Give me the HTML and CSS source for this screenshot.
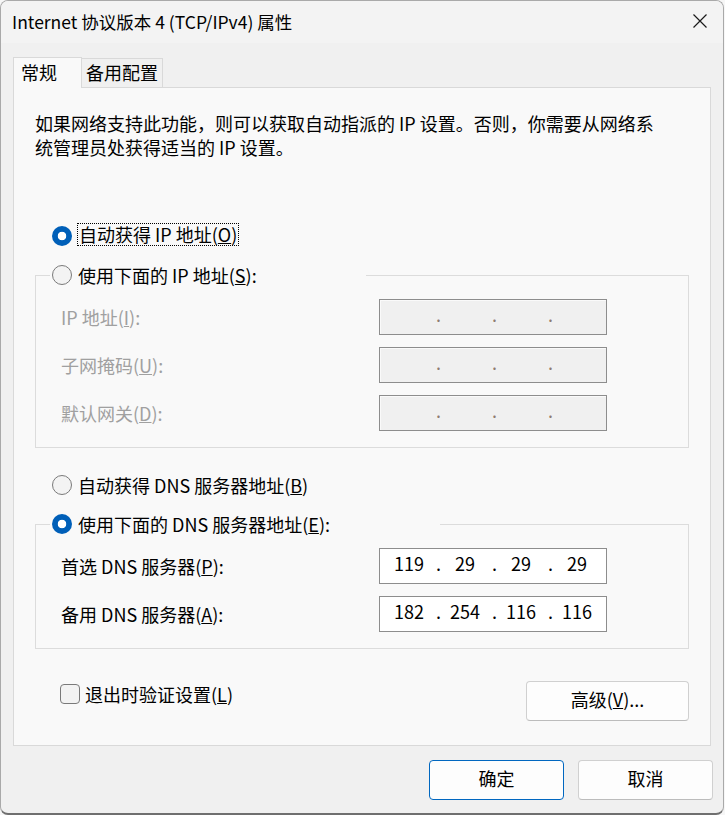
FILE: index.html
```html
<!DOCTYPE html>
<html lang="zh-CN">
<head>
<meta charset="utf-8">
<title>Internet 协议版本 4 (TCP/IPv4) 属性</title>
<link rel="stylesheet" href="styles.css">
</head>
<body>
<div class="window">
  <div class="titlebar">
    <span class="title">Internet 协议版本 4 (TCP/IPv4) 属性</span>
    <svg class="close" width="14" height="14" viewBox="0 0 14 14"><path d="M0.5 0.5 L13.5 13.5 M13.5 0.5 L0.5 13.5" stroke="#1a1a1a" stroke-width="1.2" fill="none"/></svg>
  </div>
  <div class="tabs">
    <div class="tab active">常规</div>
    <div class="tab">备用配置</div>
  </div>
  <div class="panel">
    <p class="intro">如果网络支持此功能，则可以获取自动指派的 IP 设置。否则，你需要从网络系<br>统管理员处获得适当的 IP 设置。</p>

    <div class="opt opt-first">
      <span class="radio checked"></span>
      <span class="focus">自动获得 IP 地址(<u>O</u>)</span>
    </div>

    <fieldset class="group">
      <legend class="legend legend-ip">
        <span class="radio"></span>
        <span class="opt-text">使用下面的 IP 地址(<u>S</u>):</span>
      </legend>
      <div class="rows">
        <span class="label disabled">IP 地址(<u>I</u>):</span>
        <div class="ip ip-off"><span></span><i>.</i><span></span><i>.</i><span></span><i>.</i><span></span></div>
        <span class="label disabled">子网掩码(<u>U</u>):</span>
        <div class="ip ip-off"><span></span><i>.</i><span></span><i>.</i><span></span><i>.</i><span></span></div>
        <span class="label disabled">默认网关(<u>D</u>):</span>
        <div class="ip ip-off"><span></span><i>.</i><span></span><i>.</i><span></span><i>.</i><span></span></div>
      </div>
    </fieldset>

    <div class="opt opt-dns">
      <span class="radio"></span>
      <span class="opt-text">自动获得 DNS 服务器地址(<u>B</u>)</span>
    </div>

    <fieldset class="group group-dns">
      <legend class="legend legend-dns">
        <span class="radio checked"></span>
        <span class="opt-text">使用下面的 DNS 服务器地址(<u>E</u>):</span>
      </legend>
      <div class="rows">
        <span class="label">首选 DNS 服务器(<u>P</u>):</span>
        <div class="ip"><span>119</span><i>.</i><span>29</span><i>.</i><span>29</span><i>.</i><span>29</span></div>
        <span class="label">备用 DNS 服务器(<u>A</u>):</span>
        <div class="ip"><span>182</span><i>.</i><span>254</span><i>.</i><span>116</span><i>.</i><span>116</span></div>
      </div>
    </fieldset>

    <div class="bottom-row">
      <label class="check-wrap"><span class="checkbox"></span><span>退出时验证设置(<u>L</u>)</span></label>
      <button class="btn btn-adv" type="button">高级(<u>V</u>)...</button>
    </div>
  </div>
  <div class="footer">
    <button class="btn btn-ok" type="button">确定</button>
    <button class="btn" type="button">取消</button>
  </div>
</div>
</body>
</html>
```
FILE: styles.css
```css
* { box-sizing: border-box; }
html, body { margin: 0; padding: 0; }
body {
  width: 725px;
  height: 815px;
  overflow: hidden;
  background: #f6f6f6;
  font-family: "Noto Sans CJK SC", "Noto Sans", sans-serif;
  font-size: 18px;
  color: #000;
}
.window {
  width: 724px;
  height: 815px;
  border: 1px solid #a9a9a9;
  border-bottom: 2px solid #6f6f6f;
  border-radius: 8px;
  background: #f0f0f0;
  overflow: hidden;
}
.titlebar {
  height: 42px;
  background: #f3f3f3;
  display: flex;
  align-items: center;
  padding-left: 11px;
  padding-right: 16px;
}
.title { font-size: 17.5px; line-height: 24px; }
.close { margin-left: auto; margin-top: -2px; }

.tabs {
  margin-top: 14px;
  padding-left: 12px;
  display: flex;
  align-items: flex-end;
  height: 30px;
}
.tab {
  height: 29px;
  line-height: 27px;
  border: 1px solid #d9d9d9;
  border-bottom: none;
  border-left: none;
  background: #f0f0f0;
  width: 81px;
  padding-left: 4px;
  white-space: nowrap;
}
.tab.active {
  height: 31px;
  margin-bottom: -1px;
  border-left: 1px solid #d9d9d9;
  background: #f9f9f9;
  width: 69px;
  padding-left: 7px;
  line-height: 28px;
  position: relative;
  z-index: 1;
}

.panel {
  margin: 0 12px;
  border: 1px solid #d9d9d9;
  background: #f9f9f9;
  padding: 0 0 24px 0;
}
.intro {
  margin: 23px 0 0 21px;
  line-height: 24px;
  white-space: nowrap;
}

.opt {
  display: flex;
  align-items: center;
  height: 24px;
  margin-left: 38px;
}
.opt-first { margin-top: 65px; }
.opt-dns { margin-top: 25px; }

.radio {
  width: 20px;
  height: 20px;
  border-radius: 50%;
  border: 1px solid #7a7a7a;
  background: #f3f3f3;
  flex: none;
  margin-right: 6px;
}
.radio.checked {
  border: none;
  background: radial-gradient(circle, #ffffff 0 4px, #005fb8 4.6px);
}
.focus {
  border: 1px dotted #000;
  padding: 0 1px;
  line-height: 21px;
  margin-top: -3px;
  margin-left: -1px;
}
.opt-text { line-height: 24px; white-space: nowrap; }

.group {
  margin: 15px 21px 0 21px;
  padding: 0;
  border: 1px solid #dcdcdc;
  min-width: 0;
}
.legend {
  margin-left: 14px;
  padding: 0 0 0 2px;
  height: 24px;
  display: flex;
  align-items: center;
  background: #f9f9f9;
}
.legend-ip { width: 316px; }
.legend-dns { width: 390px; }

.rows {
  display: grid;
  grid-template-columns: 318px 228px;
  row-gap: 12px;
  align-items: center;
  padding: 12px 0 16px 25px;
}
.label { white-space: nowrap; line-height: 24px; }
.disabled { color: #a0a0a0; }

.ip {
  height: 36px;
  border: 1px solid #8d8d8d;
  background: #ffffff;
  display: grid;
  grid-template-columns: 5px 48px 8px 48px 8px 48px 8px 48px;
  align-items: center;
  line-height: 24px;
  padding-bottom: 6px;
}
.ip::before { content: ""; }
.ip span { text-align: center; }
.ip i { font-style: normal; text-align: center; padding-left: 3px; }
.ip-off {
  background: #f0f0f0;
  box-shadow: inset 1px 1px 0 #fafafa;
}
.ip-off i { color: #8f7c70; }

.bottom-row {
  margin: 32px 21px 0 46px;
  display: flex;
  align-items: flex-start;
  justify-content: space-between;
}
.check-wrap {
  display: flex;
  align-items: center;
  height: 24px;
  line-height: 24px;
  margin-top: 1px;
}
.checkbox {
  width: 20px;
  height: 20px;
  border: 1px solid #7a7a7a;
  border-radius: 4px;
  background: #f3f3f3;
  margin-right: 5px;
}
.btn {
  font-family: inherit;
  font-size: 18px;
  color: #000;
  width: 135px;
  height: 40px;
  border: 1px solid #d0d0d0;
  border-bottom-color: #bcbcbc;
  border-radius: 4px;
  background: #fdfdfd;
  padding: 0 0 4px 0;
  line-height: 24px;
}
.btn-adv { width: 163px; }
.btn-ok { border: 1px solid #0067c0; }

.footer {
  margin-top: 14px;
  display: flex;
  justify-content: flex-end;
  gap: 14px;
  padding-right: 10px;
}
```
